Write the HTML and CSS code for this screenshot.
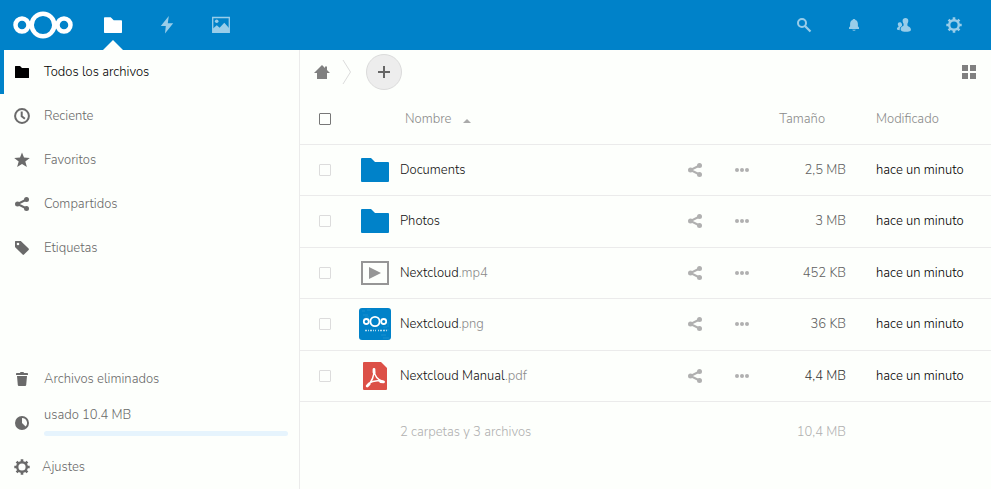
FILE: index.html
```html
<!DOCTYPE html>
<html lang="es">
<head>
<meta charset="utf-8">
<meta name="viewport" content="width=device-width, initial-scale=1">
<title>Archivos - Nextcloud</title>
<link rel="stylesheet" href="styles.css">
</head>
<body>
<svg class="sprite" aria-hidden="true">
  <symbol id="folder" viewBox="0 0 16 16"><path d="M1.500 2a.5.5 0 0 0-.5.5v11a.5.5 0 0 0 .5.5h13a.5.5 0 0 0 .5-.5v-9a.5.5 0 0 0-.5-.5H8L6 2z"/></symbol>
  <symbol id="share" viewBox="0 0 16 16"><path d="M12.500 3.500 3.500 8l9 4.500" fill="none" stroke="currentColor" stroke-width="2"/><circle cx="12.500" cy="3.500" r="2.500"/><circle cx="3.500" cy="8" r="2.500"/><circle cx="12.500" cy="12.500" r="2.500"/></symbol>
  <symbol id="more" viewBox="0 0 16 16"><circle cx="3" cy="8" r="2"/><circle cx="8" cy="8" r="2"/><circle cx="13" cy="8" r="2"/></symbol>
  <symbol id="gear" viewBox="0 0 16 16"><circle cx="8" cy="8" r="4.800" fill="none" stroke="currentColor" stroke-width="2.400"/><path d="M8 .3v3M8 12.700v3M.3 8h3M12.700 8h3M2.600 2.600l2 2M11.400 11.400l2 2M2.600 13.400l2-2M11.400 4.600l2-2" fill="none" stroke="currentColor" stroke-width="2.600"/></symbol>
  <symbol id="pict" viewBox="0 0 28 24"><path d="M1 0h9l4 4h13a1 1 0 0 1 1 1v18a1 1 0 0 1-1 1H1a1 1 0 0 1-1-1V1a1 1 0 0 1 1-1z"/></symbol>
</svg>

<header class="topbar">
  <a class="logo" href="#" aria-label="Nextcloud">
    <svg viewBox="0 0 60 28"><g fill="none" stroke="#fff" stroke-width="4.500"><circle cx="30" cy="14" r="11.300"/><circle cx="9" cy="14" r="6.500"/><circle cx="51" cy="14" r="6.500"/></g></svg>
  </a>
  <nav class="apps" aria-label="Aplicaciones">
    <a class="app app-active" href="#" aria-label="Archivos"><svg class="icon-app" viewBox="0 0 20 20"><path d="M1.700 2.200h6l3 3h7.600a.7.7 0 0 1 .7.7v11.400a.7.7 0 0 1-.7.7H1.700a.7.7 0 0 1-.7-.7V2.900a.7.7 0 0 1 .7-.7z"/></svg></a>
    <a class="app" href="#" aria-label="Actividad"><svg class="icon-app" viewBox="0 0 20 20"><path d="M11.800 1 3.800 11h5L8 18.500 16.200 8.200h-5.400z"/></svg></a>
    <a class="app" href="#" aria-label="Fotos"><svg class="icon-app" viewBox="0 0 20 20"><path d="M1.700 2.500h16.600v14.800H1.700z" fill="none" stroke="currentColor" stroke-width="1.300"/><circle cx="5.700" cy="6.300" r="1.800"/><path d="m2 17v-3.500l3.800-3.300 2.800 2.500 4.700-5L18 13v4z"/></svg></a>
  </nav>
  <div class="tools">
    <button class="tool" aria-label="Buscar"><svg class="icon" viewBox="0 0 16 16"><circle cx="6" cy="6" r="4" fill="none" stroke="currentColor" stroke-width="2"/><path d="m9 9 5.500 5.500" stroke="currentColor" stroke-width="2.200"/></svg></button>
    <button class="tool" aria-label="Notificaciones"><svg class="icon" viewBox="0 0 16 16"><path d="M8 2c-.8 0-1.300.4-1.400.9C4.800 3.500 4.100 5 4.100 7v2.200L3 10.600V12h10v-1.400l-1.100-1.400V7c0-2-.7-3.500-2.500-4.100C9.300 2.400 8.800 2 8 2zM6.200 12.800a1.900 1.500 0 0 0 3.600 0z"/></svg></button>
    <button class="tool" aria-label="Contactos"><svg class="icon" viewBox="0 0 16 16"><path d="M9.500 1C7.800 1 6.600 2 6.600 3.800c0 1.500.6 2.200 1 3v1.700C7.300 9.200 5 9.500 4.700 11.500 4.500 13 5 14.800 10 14.800s5-1.500 4.900-2.600c-.2-2.200-3.200-2.800-3.500-3.700V6.800c.4-.8.9-1.500.9-3C12.300 2 11.200 1 9.500 1z"/><path d="M3.800 5.300c-1.300 0-2 .8-2 1.900 0 .9.400 1.300.7 1.800v.8C2 10.400.9 10.600.9 12c0 .8.900 1.100 2.800 1.200-.2-2.200.7-3.300 2.200-4.100.2-.5.200-1.100 0-2.200-.3-1-1.100-1.600-2.100-1.600z"/></svg></button>
    <button class="tool" aria-label="Ajustes de usuario"><svg class="icon"><use href="#gear"/></svg></button>
  </div>
</header>

<div class="layout">
  <nav class="sidebar" aria-label="Archivos">
    <a class="side-item side-active" href="#"><svg class="icon"><use href="#folder"/></svg><span>Todos los archivos</span></a>
    <a class="side-item" href="#"><svg class="icon" viewBox="0 0 16 16"><circle cx="8" cy="8" r="6.900" fill="none" stroke="currentColor" stroke-width="2"/><path d="M7.700 3.500v4.700l3.200 2.600" fill="none" stroke="currentColor" stroke-width="2"/></svg><span>Reciente</span></a>
    <a class="side-item" href="#"><svg class="icon" viewBox="0 0 16 16"><path d="m8 .6 2 5 5.800.4-4.500 3.500 1.600 5.500L8 11.900 3.100 15l1.600-5.500L.2 6 6 5.600z"/></svg><span>Favoritos</span></a>
    <a class="side-item" href="#"><svg class="icon"><use href="#share"/></svg><span>Compartidos</span></a>
    <a class="side-item" href="#"><svg class="icon" viewBox="0 0 16 16"><path fill-rule="evenodd" d="M1.600 1h4.700c.4 0 .7.100 1 .4l7.300 7.100c.5.500.5.900 0 1.400L10 14.600c-.5.500-.9.500-1.400 0L1.400 7.400C1.100 7.100 1 6.800 1 6.400V1.600c0-.4.200-.6.600-.6zM4 2.700a1.300 1.300 0 1 0 0 2.600 1.300 1.300 0 0 0 0-2.600z"/></svg><span>Etiquetas</span></a>
    <div class="side-bottom">
      <a class="side-item" href="#"><svg class="icon" viewBox="0 0 16 16"><path d="M6.500 1 6 2H3c-.6 0-1 .4-1 1v1h12V3c0-.6-.4-1-1-1h-3l-.5-1zM3 5l.8 9c.1.600.5 1 1 1h6.400c.5 0 .9-.4 1-1L13 5z"/></svg><span>Archivos eliminados</span></a>
      <div class="quota"><svg class="icon" viewBox="0 0 16 16"><path fill-rule="evenodd" d="M8 1a7 7 0 1 0 0 14A7 7 0 0 0 8 1zm0 2a5 5 0 0 1 3.600 8.500L8 8z"/></svg>
        <div class="quota-body"><label for="quota">usado 10.4 MB</label><progress id="quota" value="0" max="100"></progress></div>
      </div>
      <button class="side-item side-settings"><svg class="icon"><use href="#gear"/></svg><span>Ajustes</span></button>
    </div>
  </nav>

  <main class="content">
    <div class="controls">
      <a class="home" href="#" aria-label="Inicio"><svg class="icon" viewBox="0 0 16 16"><path d="M8 1 0 9h3v6h10V9h3l-3-3V2.500h-2V4z"/></svg></a>
      <svg class="crumb" viewBox="0 0 10 26" aria-hidden="true"><path d="m1 1 7.500 12L1 25" fill="none" stroke="#dcdcdc"/></svg>
      <button class="add" aria-label="Nuevo"><svg viewBox="0 0 12 12"><path d="M6 0v12M0 6h12" stroke="#666" stroke-width="2"/></svg></button>
      <button class="view" aria-label="Vista de cuadrícula"><svg class="icon" viewBox="0 0 16 16"><path d="M1 1h6v6H1zM9 1h6v6H9zM1 9h6v6H1zM9 9h6v6H9z"/></svg></button>
    </div>
    <table class="files">
      <colgroup><col class="col-check"><col><col class="col-size"><col class="col-date"></colgroup>
      <thead>
        <tr>
          <th class="check"><input type="checkbox" aria-label="Seleccionar todo"></th>
          <th class="head-name">Nombre<svg class="sort" viewBox="0 0 8 4" aria-hidden="true"><path d="M0 4 4 0l4 4z"/></svg></th>
          <th class="head-size">Tamaño</th>
          <th class="date">Modificado</th>
        </tr>
      </thead>
      <tbody>
        <tr>
          <td class="check"><input type="checkbox" aria-label="Seleccionar Documents"></td>
          <td><div class="file"><span class="thumb"><svg class="folder"><use href="#pict"/></svg></span><a class="name" href="#">Documents</a><button class="action" aria-label="Compartir"><svg class="icon"><use href="#share"/></svg></button><button class="action" aria-label="Acciones"><svg class="icon"><use href="#more"/></svg></button></div></td>
          <td class="size size-mid">2,5 MB</td><td class="date">hace un minuto</td>
        </tr>
        <tr>
          <td class="check"><input type="checkbox" aria-label="Seleccionar Photos"></td>
          <td><div class="file"><span class="thumb"><svg class="folder"><use href="#pict"/></svg></span><a class="name" href="#">Photos</a><button class="action" aria-label="Compartir"><svg class="icon"><use href="#share"/></svg></button><button class="action" aria-label="Acciones"><svg class="icon"><use href="#more"/></svg></button></div></td>
          <td class="size size-mid">3 MB</td><td class="date">hace un minuto</td>
        </tr>
        <tr>
          <td class="check"><input type="checkbox" aria-label="Seleccionar Nextcloud.mp4"></td>
          <td><div class="file"><span class="thumb"><svg class="video" viewBox="0 0 28 24"><path d="M1 1h26v22H1z" fill="none" stroke="#969696" stroke-width="2"/><path d="m8 6 12 6-12 6z" fill="#969696"/></svg></span><a class="name" href="#">Nextcloud<span class="ext">.mp4</span></a><button class="action" aria-label="Compartir"><svg class="icon"><use href="#share"/></svg></button><button class="action" aria-label="Acciones"><svg class="icon"><use href="#more"/></svg></button></div></td>
          <td class="size size-mid">452 KB</td><td class="date">hace un minuto</td>
        </tr>
        <tr>
          <td class="check"><input type="checkbox" aria-label="Seleccionar Nextcloud.png"></td>
          <td><div class="file"><span class="thumb"><svg class="image" viewBox="0 0 32 32"><rect width="32" height="32" rx="3" fill="#0082c9"/><path d="M3 3h3m2-1h4M4 7h5m-3 2h4M24 19h4m-3 3h5m-8 5h5m-3 3h6M29 14v5" stroke="#1a8fce" fill="none"/><g fill="none" stroke="#fff" stroke-width="1.800"><circle cx="16" cy="13.500" r="4.600"/><circle cx="7.300" cy="13.500" r="2.500"/><circle cx="24.700" cy="13.500" r="2.500"/></g><path d="M6 22.500h2m1 0h1m1 0h2m1 0h1m1 0h1m2 0h1m1 0h2m1 0h2m1 0h1" stroke="#b3daef" stroke-width="1.500"/></svg></span><a class="name" href="#">Nextcloud<span class="ext">.png</span></a><button class="action" aria-label="Compartir"><svg class="icon"><use href="#share"/></svg></button><button class="action" aria-label="Acciones"><svg class="icon"><use href="#more"/></svg></button></div></td>
          <td class="size size-mid">36 KB</td><td class="date">hace un minuto</td>
        </tr>
        <tr>
          <td class="check"><input type="checkbox" aria-label="Seleccionar Nextcloud Manual.pdf"></td>
          <td><div class="file"><span class="thumb"><svg class="pdf" viewBox="0 0 24 28"><path d="M1 0h17l6 6v21a1 1 0 0 1-1 1H1a1 1 0 0 1-1-1V1a1 1 0 0 1 1-1z" fill="#dc5047"/><path d="M11 7.500c.2 4.500-1.500 11.500-6.800 16.500M11 7.500c.3 5.500 3.500 10.500 9.500 12.300M5.500 21.500c3.500-2.500 9-3.600 14.500-2" fill="none" stroke="#fff" stroke-width="1.500" stroke-linecap="round"/><path d="M11 7.500v3M4.200 24l2-2M17.500 19.500l3 .4" stroke="#fff" stroke-width="2.800" stroke-linecap="round"/></svg></span><a class="name" href="#">Nextcloud Manual<span class="ext">.pdf</span></a><button class="action" aria-label="Compartir"><svg class="icon"><use href="#share"/></svg></button><button class="action" aria-label="Acciones"><svg class="icon"><use href="#more"/></svg></button></div></td>
          <td class="size size-dark">4,4 MB</td><td class="date">hace un minuto</td>
        </tr>
      </tbody>
      <tfoot>
        <tr><td></td><td class="summary">2 carpetas y 3 archivos</td><td class="size">10,4 MB</td><td></td></tr>
      </tfoot>
    </table>
  </main>
</div>
</body>
</html>
```
FILE: styles.css
```css
* { box-sizing: border-box; }
body {
  margin: 0;
  min-height: 100vh;
  display: flex;
  flex-direction: column;
  background: #fdfffc;
  color: #111;
  font: 300 13px/20px Nunito, Roboto, sans-serif;
}
a { color: inherit; text-decoration: none; }
button { margin: 0; padding: 0; border: 0; background: none; color: inherit; font: inherit; cursor: pointer; }
svg { display: block; fill: currentColor; flex: none; }
.sprite { position: absolute; width: 0; height: 0; }
.icon { width: 16px; height: 16px; }

.topbar { display: flex; height: 50px; padding: 0 12px; background: #0082c9; color: #fff; }
.logo { display: flex; align-items: center; width: 74px; padding-left: 1px; }
.logo svg { width: 60px; height: 28px; }
.apps { display: flex; }
.app { position: relative; display: flex; align-items: center; justify-content: center; width: 54px; color: #99cde9; }
.app-active { color: #fff; }
.app-active::after {
  content: "";
  position: absolute;
  bottom: 0;
  left: 17px;
  border: 10px solid transparent;
  border-top: 0;
  border-bottom-color: #fdfffc;
}
.icon-app { width: 20px; height: 20px; }
.tools { display: flex; margin-left: auto; }
.tool { display: flex; align-items: center; justify-content: center; width: 50px; color: #99cde9; }

.layout { display: flex; flex: 1; }
.sidebar { display: flex; flex-direction: column; flex: none; width: 300px; border-right: 1px solid #ebebeb; color: #696969; }
.side-item { display: flex; align-items: center; gap: 14px; height: 44px; padding-left: 14px; }
.side-active { border-left: 4px solid #0082c9; padding-left: 10px; color: #000; }
.side-bottom { margin-top: auto; }
.side-item .icon, .quota .icon { color: #6a6a6a; }
.side-active .icon { color: #000; }
.side-settings { width: 100%; gap: 12px; }
.quota { display: flex; align-items: center; gap: 14px; height: 44px; padding: 0 11px 0 14px; }
.quota-body { flex: 1; display: flex; flex-direction: column; gap: 6px; padding-bottom: 5px; }
progress { appearance: none; display: block; width: 100%; height: 5px; border: 0; border-radius: 3px; overflow: hidden; background: #e6f4fd; }
progress::-webkit-progress-bar { background: #e6f4fd; }
progress::-webkit-progress-value { background: #0082c9; }

.content { flex: 1; min-width: 0; }
.controls { display: flex; align-items: center; height: 44px; padding: 0 14px; color: #808080; }
.crumb { width: 10px; height: 26px; margin: 0 14px 0 12px; }
.add { display: flex; align-items: center; justify-content: center; width: 36px; height: 36px; border: 1px solid #dbdbdb; border-radius: 50%; background: #ededed; }
.add svg { width: 12px; height: 12px; }
.view { margin-left: auto; }

.files { width: 100%; table-layout: fixed; border-collapse: collapse; }
.col-check { width: 50px; }
.col-size { width: 80px; }
.col-date { width: 145px; }
th, td { height: 51px; padding: 0; border-bottom: 1px solid #ebebeb; text-align: left; font-weight: 300; }
th { height: 50px; color: #8a8a8a; }
tbody tr:nth-child(even) td { height: 52px; }
.check input { appearance: none; display: block; width: 12px; height: 12px; margin: 0 0 0 19px; border: 1px solid #dcdcdc; border-radius: 1px; }
th.check input { border-color: #777; }
.head-name { padding-left: 55px; }
.sort { display: inline-block; width: 8px; height: 4px; margin-left: 12px; vertical-align: 0; fill: #aaa; }
.head-size { padding-right: 21px; text-align: right; }
.date { padding-left: 30px; }
td.date { color: #000; }
.file { display: flex; align-items: center; height: 44px; padding-right: 2px; }
.thumb { display: flex; justify-content: center; width: 50px; }
.folder { width: 28px; height: 24px; fill: #0082c9; }
.video { width: 28px; height: 24px; }
.image { width: 32px; height: 32px; }
.pdf { width: 24px; height: 28px; }
.name { flex: 1; }
.ext { color: #8a8a8a; }
.action { display: flex; align-items: center; justify-content: center; width: 44px; height: 44px; color: #b0b0b0; }
.action + .action { margin-left: 3px; }
.size { text-align: right; }
.size-mid { color: #606060; }
.size-dark { color: #333; }
tfoot td { height: 62px; border: 0; color: #b0b0b0; }
.summary { padding-left: 50px; }
```
